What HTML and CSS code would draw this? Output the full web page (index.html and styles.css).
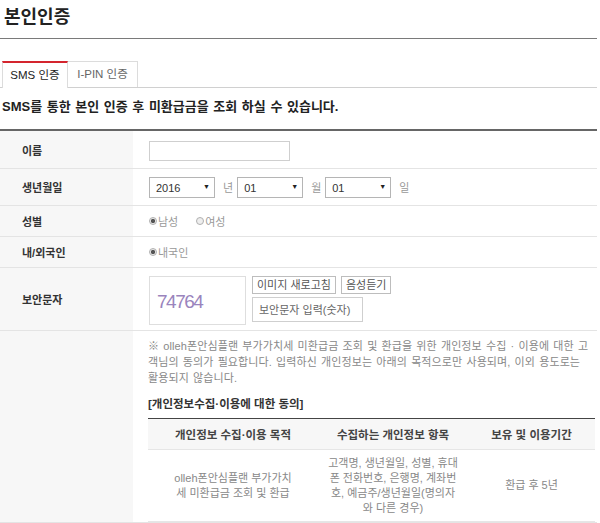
FILE: index.html
```html
<!DOCTYPE html>
<html lang="ko">
<head>
    <meta charset="UTF-8">
    <meta name="viewport" content="width=device-width, initial-scale=1.0">
    <title>본인인증</title>
    <link rel="stylesheet" href="styles.css">
</head>
<body>

    <div class="page">
        <h1 class="page-title">본인인증</h1>

        <!-- 인증 방식 탭 -->
        <ul class="tabs">
            <li class="tab on">SMS 인증</li>
            <li class="tab">I-PIN 인증</li>
        </ul>

        <p class="lead">SMS를 통한 본인 인증 후 미환급금을 조회 하실 수 있습니다.</p>

        <!-- 입력 폼 -->
        <div class="form">
            <div class="row row-name">
                <div class="label">이름</div>
                <div class="value">
                    <input type="text" class="txt-name">
                </div>
            </div>

            <div class="row row-birth">
                <div class="label">생년월일</div>
                <div class="value">
                    <span class="select"><select><option>2016</option></select></span>
                    <span class="unit">년</span>
                    <span class="select"><select><option>01</option></select></span>
                    <span class="unit">월</span>
                    <span class="select"><select><option>01</option></select></span>
                    <span class="unit">일</span>
                </div>
            </div>

            <div class="row row-gender">
                <div class="label">성별</div>
                <div class="value">
                    <label class="radio"><input type="radio" name="gender" checked>남성</label>
                    <label class="radio"><input type="radio" name="gender">여성</label>
                </div>
            </div>

            <div class="row row-nation">
                <div class="label">내/외국인</div>
                <div class="value">
                    <label class="radio"><input type="radio" name="nation" checked>내국인</label>
                </div>
            </div>

            <div class="row row-captcha">
                <div class="label">보안문자</div>
                <div class="value">
                    <div class="captcha"><span class="captcha-code">74764</span></div>
                    <div class="captcha-ctrl">
                        <div class="captcha-btns">
                            <button type="button">이미지 새로고침</button>
                            <button type="button">음성듣기</button>
                        </div>
                        <input type="text" class="txt-captcha" placeholder="보안문자 입력(숫자)">
                    </div>
                </div>
            </div>

            <div class="row row-agree">
                <div class="label"></div>
                <div class="value">
                    <p class="notice">※ olleh폰안심플랜 부가가치세 미환급금 조회 및 환급을 위한 개인정보 수집 · 이용에 대한 고객님의 동의가 필요합니다. 입력하신 개인정보는 아래의 목적으로만 사용되며, 이외 용도로는 활용되지 않습니다.</p>
                    <p class="agree-title">[개인정보수집·이용에 대한 동의]</p>

                    <table class="agree-table">
                        <colgroup>
                            <col class="col-purpose">
                            <col class="col-items">
                            <col>
                        </colgroup>
                        <thead>
                            <tr>
                                <th>개인정보 수집·이용 목적</th>
                                <th>수집하는 개인정보 항목</th>
                                <th>보유 및 이용기간</th>
                            </tr>
                        </thead>
                        <tbody>
                            <tr>
                                <td class="purpose">olleh폰안심플랜 부가가치세 미환급금 조회 및 환급</td>
                                <td class="items">고객명, 생년월일, 성별, 휴대폰 전화번호, 은행명, 계좌번호, 예금주/생년월일(명의자와 다른 경우)</td>
                                <td>환급 후 5년</td>
                            </tr>
                        </tbody>
                    </table>
                </div>
            </div>
        </div>
    </div>

</body>
</html>
```

FILE: styles.css
```css
body {
    margin: 0;
    font-family: 'Liberation Sans', 'Noto Sans CJK KR', sans-serif;
    color: #333;
    background: #fff;
}

.page {
    width: 597px;
}

.page-title {
    margin: 0;
    padding: 4px 0 8px 4px;
    font-size: 18px;
    line-height: 26px;
    font-weight: bold;
    color: #222;
    border-bottom: 1px solid #7a7a7a;
}

/* 탭 */
.tabs {
    list-style: none;
    margin: 22px 0 0;
    padding: 0 0 0 2px;
    height: 26px;
    display: flex;
    align-items: flex-start;
    border-bottom: 1px solid #d0d0d0;
}

.tab {
    box-sizing: border-box;
    width: 70px;
    height: 26px;
    border: 1px solid #dcdcdc;
    border-bottom: none;
    border-left: none;
    font-size: 11.5px;
    line-height: 25px;
    text-align: center;
    color: #666;
    background: #fff;
}

.tab.on {
    width: 66px;
    height: 27px;
    border-left: 1px solid #dcdcdc;
    border-top: 2px solid #d4252e;
    line-height: 24px;
    color: #222;
}

.lead {
    margin: 10px 0 0;
    padding-left: 2px;
    font-size: 13px;
    line-height: 18px;
    font-weight: bold;
    word-spacing: 1px;
    color: #222;
}

/* 입력 폼 */
.form {
    margin-top: 13px;
    border-top: 2px solid #666;
}

.row {
    display: flex;
    border-bottom: 1px solid #e4e4e4;
}

.row-name { height: 37px; }
.row-birth { height: 36px; }
.row-gender { height: 30px; }
.row-nation { height: 30px; }
.row-captcha { height: 62px; }

.label {
    box-sizing: border-box;
    width: 133px;
    flex: none;
    display: flex;
    align-items: center;
    padding-left: 22px;
    background: #f7f7f7;
    font-size: 11px;
    font-weight: bold;
    color: #333;
}

.value {
    flex: 1;
    display: flex;
    align-items: center;
    padding-left: 16px;
    font-size: 11px;
    color: #888;
}

.txt-name {
    box-sizing: border-box;
    width: 141px;
    height: 20px;
    margin: 2px 0 0;
    border: 1px solid #cfcfcf;
    padding: 0 4px;
}

.select {
    position: relative;
    display: inline-block;
}

.select select {
    appearance: none;
    -webkit-appearance: none;
    box-sizing: border-box;
    width: 66px;
    height: 21px;
    margin: 0;
    padding: 2px 0 0 6px;
    border: 1px solid #b5b5b5;
    border-radius: 0;
    background: #fff;
    font-family: 'Liberation Sans', sans-serif;
    font-size: 11px;
    color: #333;
}

.select::after {
    content: '▼';
    position: absolute;
    right: 5px;
    top: 6px;
    font-size: 7px;
    color: #222;
    pointer-events: none;
}

.unit {
    margin: 0 4px 0 8px;
    font-size: 11px;
    color: #999;
}

.radio {
    display: inline-flex;
    align-items: center;
    margin-right: 18px;
    color: #999;
}

.radio input {
    appearance: none;
    -webkit-appearance: none;
    width: 8px;
    height: 8px;
    margin: 0 1px 0 0;
    border: 1px solid #b0b0b0;
    border-radius: 50%;
    background: #eee;
}

.radio input:checked {
    background: radial-gradient(circle, #555 45%, #e8e8e8 55%);
}

/* 보안문자 */
.captcha {
    box-sizing: border-box;
    width: 97px;
    height: 49px;
    border: 1px solid #dedede;
    display: flex;
    align-items: center;
    padding: 4px 0 0 7px;
    margin-top: 2px;
}

.captcha-code {
    font-family: 'Liberation Sans', sans-serif;
    font-size: 19px;
    letter-spacing: -1.5px;
    color: #9a84bd;
}

.captcha-ctrl {
    margin-left: 6px;
    display: flex;
    flex-direction: column;
    gap: 3px;
}

.captcha-btns {
    display: flex;
    gap: 5px;
}

.captcha-btns button {
    height: 18px;
    padding: 0 4px;
    border: 1px solid #bdbdbd;
    border-radius: 0;
    background: #fff;
    font-family: 'Liberation Sans', 'Noto Sans CJK KR', sans-serif;
    font-size: 11px;
    line-height: 16px;
    color: #555;
}

.txt-captcha {
    box-sizing: border-box;
    width: 111px;
    height: 25px;
    padding: 0 6px;
    border: 1px solid #cfcfcf;
    font-family: 'Liberation Sans', 'Noto Sans CJK KR', sans-serif;
    font-size: 11px;
}

.txt-captcha::placeholder {
    color: #666;
}

/* 동의 영역 */
.row-agree .value {
    display: block;
    padding: 7px 2px 0 15px;
}

.notice {
    margin: 0 6px 0 0;
    font-size: 11px;
    line-height: 16px;
    word-spacing: 1px;
    letter-spacing: 0.1px;
    color: #888;
}

.agree-title {
    margin: 10px 0 6px;
    font-size: 11.5px;
    line-height: 16px;
    font-weight: bold;
    color: #333;
}

.agree-table {
    width: 100%;
    border-collapse: collapse;
    border-top: 1px solid #444;
    table-layout: fixed;
}

.col-purpose { width: 170px; }
.col-items { width: 150px; }

.agree-table th {
    height: 30px;
    padding: 0;
    background: #f7f7f7;
    border-bottom: 1px solid #e6e6e6;
    font-size: 11.5px;
    font-weight: bold;
    color: #444;
}

.agree-table td {
    height: 71px;
    padding: 0 9px;
    border-bottom: 1px solid #e6e6e6;
    text-align: center;
    font-size: 11px;
    line-height: 15px;
    color: #888;
}

.agree-table td.purpose {
    padding: 0 25px;
}
```
